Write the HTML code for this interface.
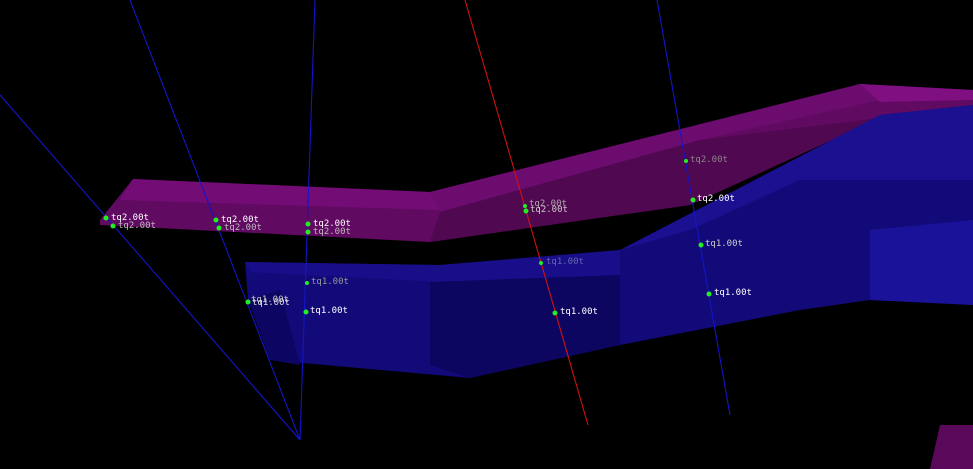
<!DOCTYPE html>
<html><head><style>html,body{margin:0;padding:0;background:#000;width:973px;height:469px;overflow:hidden}
text{font-family:"DejaVu Sans Mono","Liberation Mono",monospace;font-size:9px}</style></head><body>
<svg width="973" height="469" viewBox="0 0 973 469">
<rect width="973" height="469" fill="#000"/>
<!-- purple body -->
<polygon points="100,220 133,179 430,192 860,84 973,90 973,110 880,118 690,205 430,242 100,225" fill="#600a62"/>
<polygon points="133,179 430,192 440,210 120,200" fill="#740c76"/>
<polygon points="430,192 860,84 880,100 700,140 440,212" fill="#6c0c6e"/>
<polygon points="860,84 973,90 973,100 880,102" fill="#800f82"/>
<polygon points="440,212 700,140 880,118 690,205 430,242" fill="#500850"/>
<!-- blue body -->
<polygon points="245,262 440,265 620,250 880,115 973,105 973,305 870,300 800,310 620,345 470,378 270,360 248,300" fill="#120a78"/>
<polygon points="620,250 880,115 973,105 973,180 800,180 690,230" fill="#1a1090"/>
<polygon points="245,262 440,265 620,250 620,275 440,282 250,272" fill="#180e8a"/>
<polygon points="870,230 973,220 973,305 870,300" fill="#1a1298"/>
<polygon points="430,282 620,275 620,345 470,378 430,365" fill="#0c0660"/>
<polygon points="248,300 270,360 300,365 280,290" fill="#0c0662"/>
<polygon points="940,425 973,425 973,469 930,469" fill="#5a085a"/>
<!-- lines -->
<g stroke="#1414c8" stroke-width="1.1" fill="none">
<line x1="0" y1="95" x2="300" y2="440"/>
<line x1="130" y1="0" x2="300" y2="440"/>
<line x1="315" y1="0" x2="300" y2="440"/>
<line x1="657" y1="0" x2="730" y2="415"/>
</g>
<line x1="465" y1="0" x2="588" y2="425" stroke="#d01010" stroke-width="1.1"/>
<!-- points -->
<g fill="#22ee22">
<circle cx="106" cy="218" r="2.5"/><circle cx="113" cy="226" r="2.5"/>
<circle cx="216" cy="220" r="2.5"/><circle cx="219" cy="228" r="2.5"/>
<circle cx="308" cy="224" r="2.5"/><circle cx="308" cy="232" r="2.5"/>
<circle cx="248" cy="302" r="2.5"/><circle cx="307" cy="283" r="2"/><circle cx="306" cy="312" r="2.5"/>
<circle cx="525" cy="206" r="2"/><circle cx="526" cy="211" r="2.5"/>
<circle cx="686" cy="161" r="2"/><circle cx="693" cy="200" r="2.5"/>
<circle cx="541" cy="263" r="2"/><circle cx="555" cy="313" r="2.5"/>
<circle cx="701" cy="245" r="2.5"/><circle cx="709" cy="294" r="2.5"/>
</g>
<g fill="#fff">
<text x="111" y="220">tq2.00t</text><text x="118" y="228" fill="#bbb">tq2.00t</text>
<text x="221" y="222">tq2.00t</text><text x="224" y="230" fill="#bbb">tq2.00t</text>
<text x="313" y="226">tq2.00t</text><text x="313" y="234" fill="#bbb">tq2.00t</text>
<text x="251" y="302" fill="#ccc">tq1.00t</text><text x="252" y="305" fill="#ddd">tq1.00t</text>
<text x="311" y="284" fill="#999">tq1.00t</text><text x="310" y="313">tq1.00t</text>
<text x="529" y="206" fill="#aaa">tq2.00t</text><text x="530" y="212" fill="#ccc">tq2.00t</text>
<text x="690" y="162" fill="#888">tq2.00t</text><text x="697" y="201">tq2.00t</text>
<text x="546" y="264" fill="#6666aa">tq1.00t</text><text x="560" y="314">tq1.00t</text>
<text x="705" y="246" fill="#ccc">tq1.00t</text><text x="714" y="295">tq1.00t</text>
</g>
</svg>
</body></html>
